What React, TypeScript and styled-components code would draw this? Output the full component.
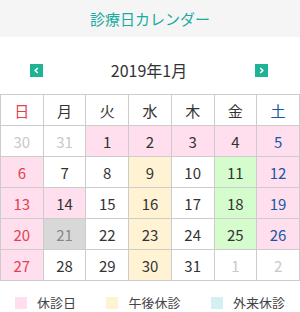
import styled, { createGlobalStyle } from "styled-components";

const Global = createGlobalStyle`
    body {
        margin: 0;
        background: #fff;
        font-family: "Noto Sans CJK JP", "Noto Sans", sans-serif;
        color: #333;
    }
`

const Page = styled.div`
    width: 300px;
`

const Header = styled.div`
    height: 37px;
    background: #f5f5f5;
    display: flex;
    align-items: center;
    justify-content: center;
    color: #1aaba0;
    font-size: 15px;
`

const Nav = styled.div`
    height: 26px;
    margin: 20px 0 11px;
    padding: 0 32px 0 30px;
    display: flex;
    align-items: center;
    justify-content: space-between;
`

const NavButton = styled.button`
    width: 13px;
    height: 13px;
    padding: 0;
    border: none;
    background: #1db394;
    display: flex;
    align-items: center;
    justify-content: center;
    cursor: pointer;
`

const Month = styled.div`
    font-size: 16px;
    color: #333;
`

const Table = styled.table`
    width: 300px;
    border-collapse: collapse;
    table-layout: fixed;
`

const Th = styled.th<{ $color?: string }>`
    height: 30px;
    padding: 0;
    border: 1px solid #ccc;
    font-weight: normal;
    font-size: 15px;
    color: ${(p) => p.$color || "#333"};
`

const Td = styled.td<{ $bg?: string; $color?: string }>`
    height: 30px;
    padding: 0;
    border: 1px solid #ccc;
    text-align: center;
    font-size: 15px;
    background: ${(p) => p.$bg || "#fff"};
    color: ${(p) => p.$color || "#333"};
`

const Legend = styled.div`
    display: flex;
    justify-content: space-between;
    padding: 15px 15px 0;
`

const LegendItem = styled.div`
    display: flex;
    align-items: center;
    gap: 10px;
    font-size: 13px;
    line-height: 13px;
    color: #444;
`

const Swatch = styled.span<{ $bg: string }>`
    width: 12px;
    height: 12px;
    background: ${(p) => p.$bg};
`

const PINK = "#ffdeee";
const YELLOW = "#fff3d4";
const GREEN = "#d5fccd";
const GRAY = "#d8d8d8";
const BLUE_BG = "#d3f1f3";

const RED = "#e2414f";
const BLUE = "#1a56a3";
const FADED = "#c8c8c8";

type Cell = { d: number; bg?: string; faded?: boolean; dim?: boolean };

const weeks: Cell[][] = [
    [{ d: 30, faded: true }, { d: 31, faded: true }, { d: 1, bg: PINK }, { d: 2, bg: PINK }, { d: 3, bg: PINK }, { d: 4, bg: PINK }, { d: 5, bg: PINK }],
    [{ d: 6, bg: PINK }, { d: 7 }, { d: 8 }, { d: 9, bg: YELLOW }, { d: 10 }, { d: 11, bg: GREEN }, { d: 12, bg: PINK }],
    [{ d: 13, bg: PINK }, { d: 14, bg: PINK }, { d: 15 }, { d: 16, bg: YELLOW }, { d: 17 }, { d: 18, bg: GREEN }, { d: 19, bg: PINK }],
    [{ d: 20, bg: PINK }, { d: 21, bg: GRAY, dim: true }, { d: 22 }, { d: 23, bg: YELLOW }, { d: 24 }, { d: 25, bg: GREEN }, { d: 26, bg: PINK }],
    [{ d: 27, bg: PINK }, { d: 28 }, { d: 29 }, { d: 30, bg: YELLOW }, { d: 31 }, { d: 1, faded: true }, { d: 2, faded: true }],
];

const days = ["日", "月", "火", "水", "木", "金", "土"];

const dayColor = (i: number) => (i === 0 ? RED : i === 6 ? BLUE : "#333");

const Chevron = ({ dir }: { dir: "left" | "right" }) => (
    <svg width="7" height="7" viewBox="0 0 7 7">
        <path
            d={dir === "left" ? "M4.8 1 L2.2 3.5 L4.8 6" : "M2.2 1 L4.8 3.5 L2.2 6"}
            fill="none"
            stroke="#fff"
            strokeWidth="1.6"
        />
    </svg>
);

const App = () => {
    return (
        <Page>
            <Global />
            <Header>診療日カレンダー</Header>
            <Nav>
                <NavButton aria-label="前月"><Chevron dir="left" /></NavButton>
                <Month>2019年1月</Month>
                <NavButton aria-label="翌月"><Chevron dir="right" /></NavButton>
            </Nav>
            <Table>
                <thead>
                    <tr>
                        {days.map((d, i) => (
                            <Th key={d} $color={dayColor(i)}>{d}</Th>
                        ))}
                    </tr>
                </thead>
                <tbody>
                    {weeks.map((w, wi) => (
                        <tr key={wi}>
                            {w.map((c, i) => (
                                <Td
                                    key={i}
                                    $bg={c.bg}
                                    $color={c.faded ? FADED : c.dim ? "#888" : dayColor(i)}
                                >
                                    {c.d}
                                </Td>
                            ))}
                        </tr>
                    ))}
                </tbody>
            </Table>
            <Legend>
                <LegendItem><Swatch $bg={PINK} />休診日</LegendItem>
                <LegendItem><Swatch $bg={YELLOW} />午後休診</LegendItem>
                <LegendItem><Swatch $bg={BLUE_BG} />外来休診</LegendItem>
            </Legend>
        </Page>
    )
}

export default App;
